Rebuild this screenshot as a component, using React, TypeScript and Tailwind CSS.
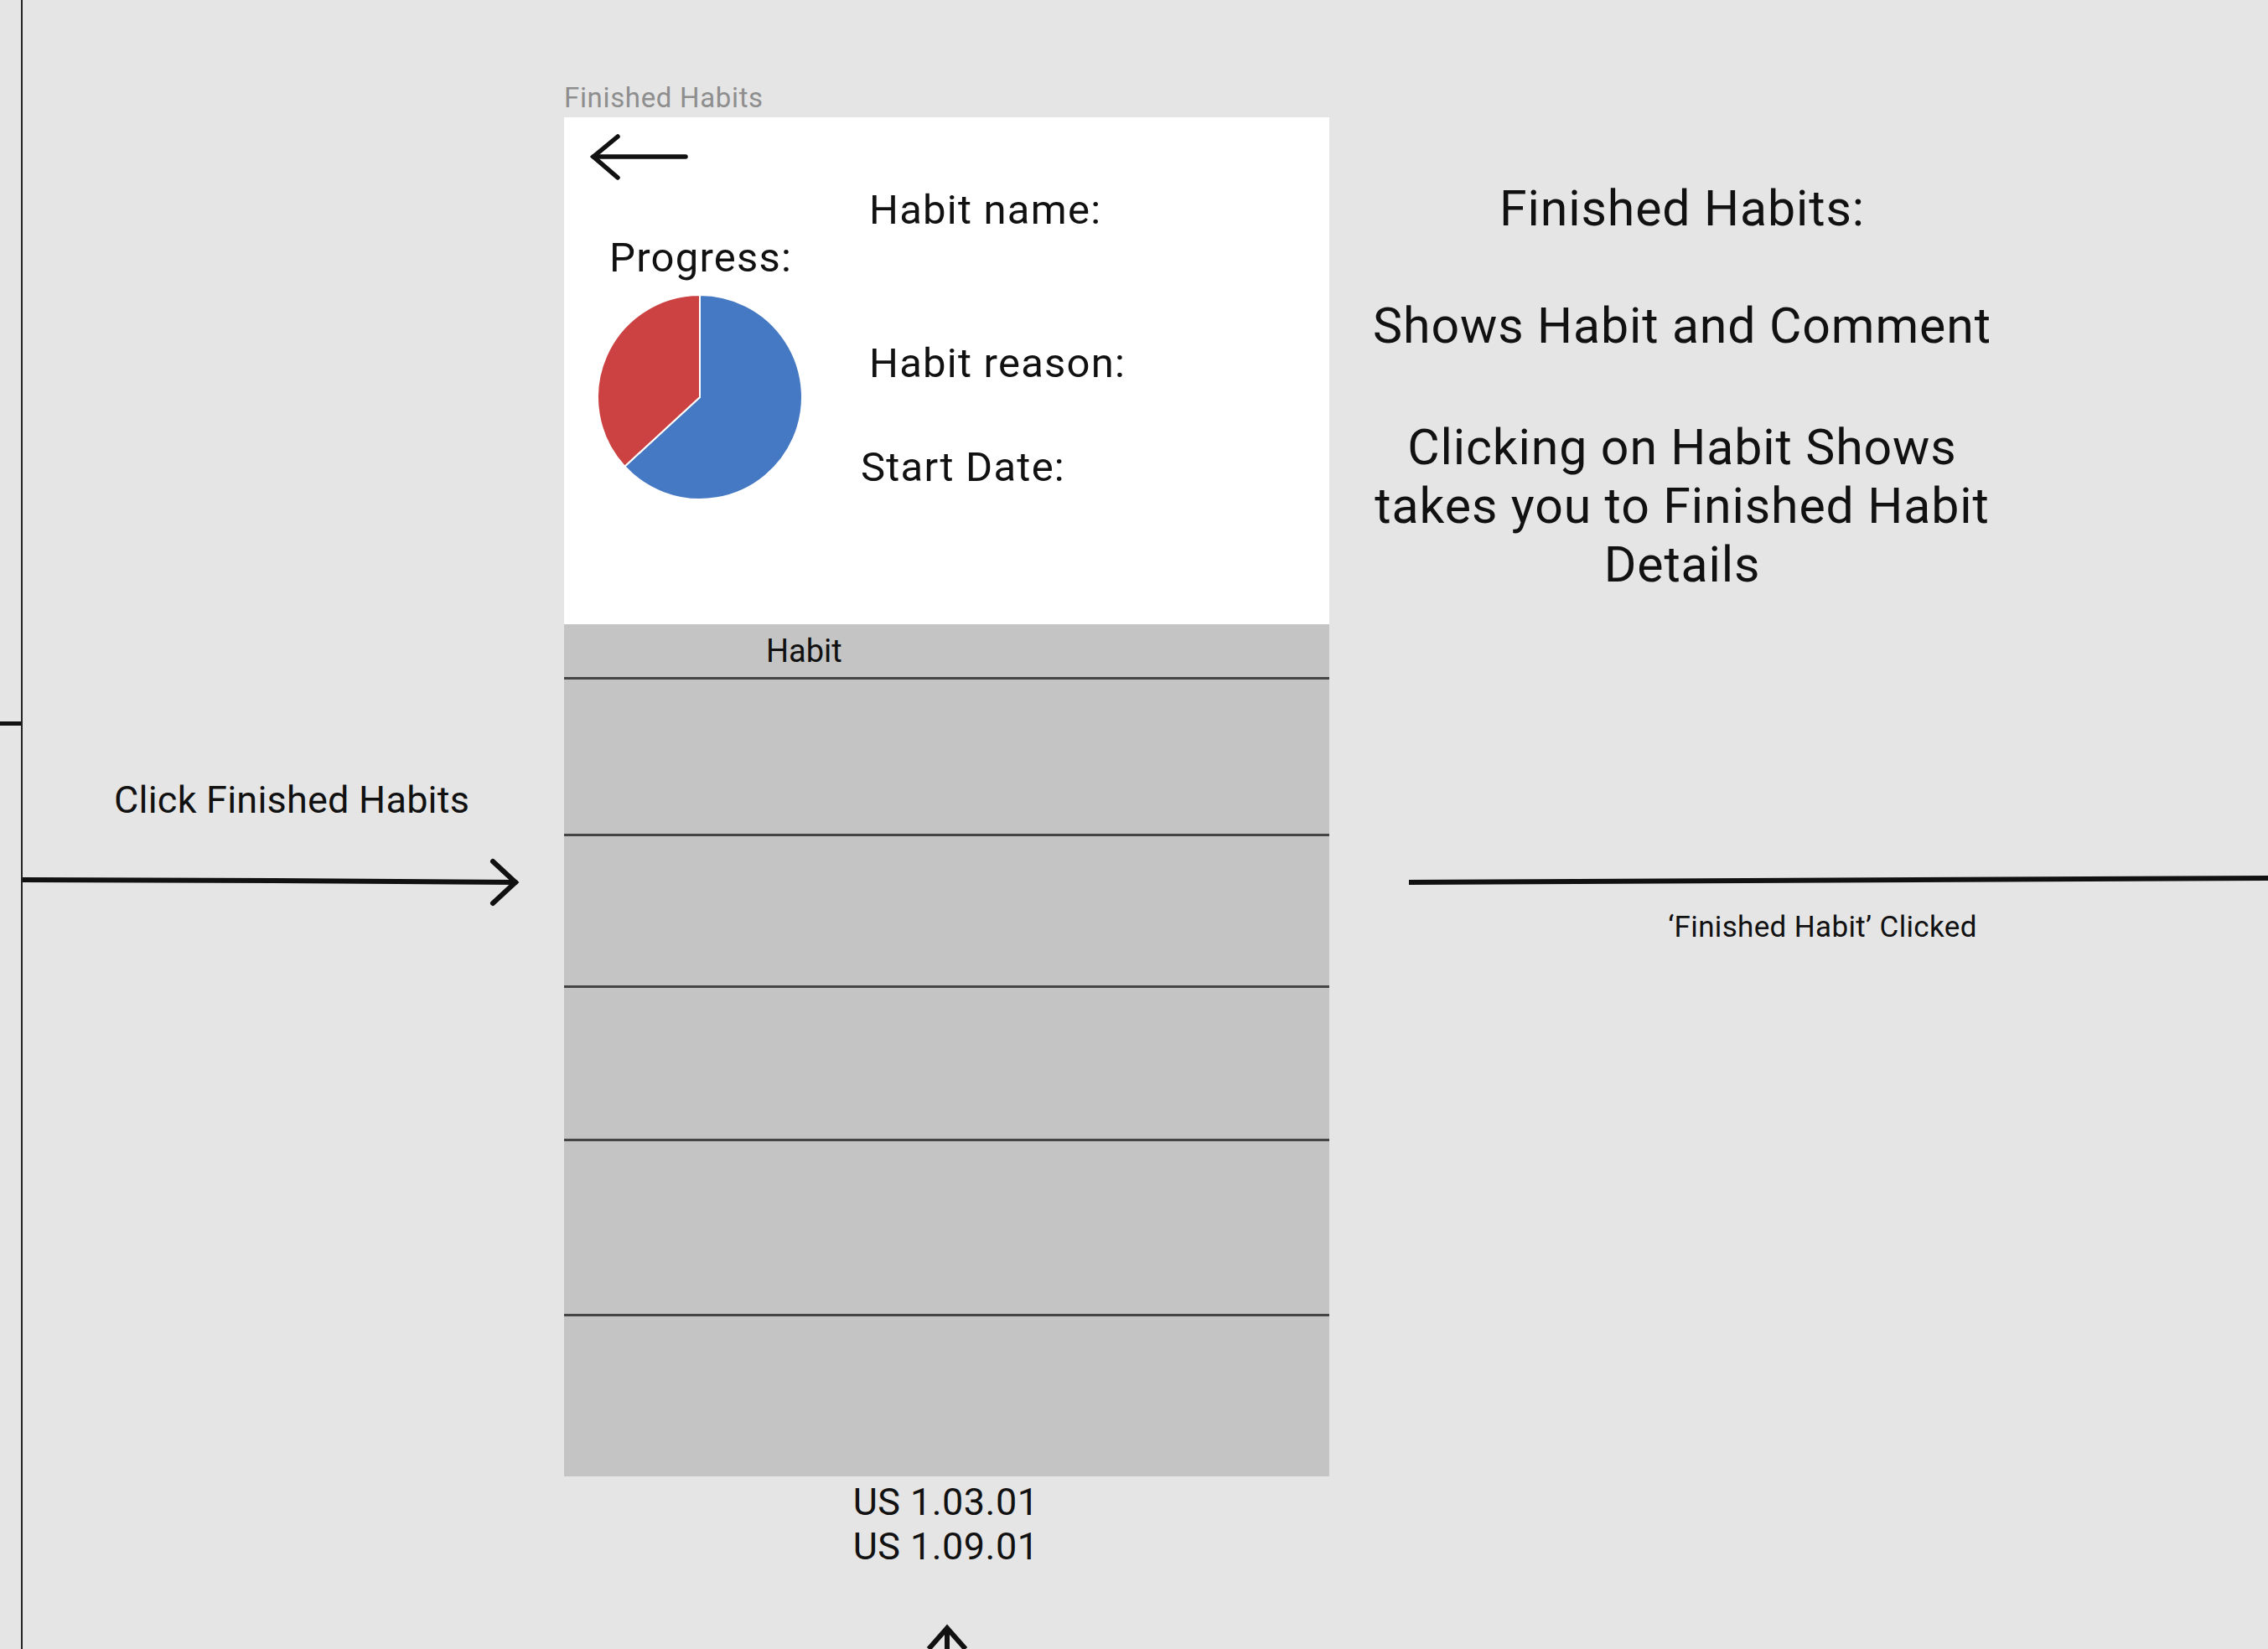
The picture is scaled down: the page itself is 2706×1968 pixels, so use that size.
export default function App() {
  const cx = 124;
  const cy = 123;
  const r = 122;
  const bx = cx - 89.7;
  const by = cy + 82.7;
  return (
    <div className="flex w-[2706px] h-[1968px] overflow-hidden bg-[#e5e5e5] text-[#111] font-['Roboto',sans-serif]">
      {/* left connector area */}
      <div className="flex w-[673px] shrink-0 h-full">
        <div className="w-[25px] shrink-0 pt-[861px]">
          <div className="h-[5px] bg-[#111]" />
        </div>
        <div className="w-[2px] shrink-0 h-full bg-[#222]" />
        <div className="flex-1 flex flex-col pt-[932px]">
          <div className="ml-[109px] text-[45px] leading-none tracking-[0.005em] whitespace-nowrap">
            Click Finished Habits
          </div>
          <svg className="mt-[45px]" width="600" height="63" viewBox="0 0 600 63" fill="none">
            <path d="M0 28 L300 29 L588 31" stroke="#111" strokeWidth="6" strokeLinecap="round" />
            <path d="M561 6 L588 31 L561 56" stroke="#111" strokeWidth="6" strokeLinecap="round" strokeLinejoin="miter" />
          </svg>
        </div>
      </div>

      {/* phone screen */}
      <div className="flex flex-col w-[913px] shrink-0">
        <div className="mt-[100px] text-[33px] leading-none tracking-[0.02em] text-[#8e8e8e] whitespace-nowrap">
          Finished Habits
        </div>
        <div className="mt-[7px] h-[606px] bg-white flex">
          <div className="w-[354px] shrink-0 flex flex-col">
            <svg className="ml-[27px] mt-[15px]" width="125" height="65" viewBox="0 0 125 65" fill="none">
              <path d="M8 32 L118 32" stroke="#111" strokeWidth="5.5" strokeLinecap="round" />
              <path d="M37 8 L8 32 L37 57" stroke="#111" strokeWidth="5.5" strokeLinecap="round" strokeLinejoin="miter" />
            </svg>
            <div className="ml-[54px] mt-[63px] text-[49px] leading-none tracking-[0.025em] whitespace-nowrap">
              Progress:
            </div>
            <svg className="ml-[38px] mt-[19px]" width="250" height="248" viewBox="0 0 250 248">
              <path
                d={`M${cx} ${cy} L${cx} ${cy - r} A${r} ${r} 0 1 1 ${bx} ${by} Z`}
                fill="#4679c3"
                stroke="#ffffff"
                strokeWidth="2"
                strokeLinejoin="round"
              />
              <path
                d={`M${cx} ${cy} L${bx} ${by} A${r} ${r} 0 0 1 ${cx} ${cy - r} Z`}
                fill="#cc4242"
                stroke="#ffffff"
                strokeWidth="2"
                strokeLinejoin="round"
              />
            </svg>
          </div>
          <div className="flex flex-col text-[49px] leading-none tracking-[0.025em] whitespace-nowrap">
            <div className="ml-[10px] mt-[86px]">Habit name:</div>
            <div className="ml-[10px] mt-[134px]">Habit reason:</div>
            <div className="mt-[75px]">Start Date:</div>
          </div>
        </div>
        <div className="h-[1018px] bg-[#c4c4c4] flex flex-col">
          <div className="h-[66px] border-b-[3px] border-[#444] pl-[241px] pt-[13px] text-[38px] leading-none">Habit</div>
          <div className="h-[187px] border-b-[3px] border-[#444]" />
          <div className="h-[181px] border-b-[3px] border-[#444]" />
          <div className="h-[183px] border-b-[3px] border-[#444]" />
          <div className="h-[209px] border-b-[3px] border-[#444]" />
          <div className="flex-1" />
        </div>
        <div className="mt-[4px] pr-[2px] text-center text-[45px] leading-[53px] tracking-[0.01em]">
          US 1.03.01
          <br />
          US 1.09.01
        </div>
        <svg className="self-center mt-[66px]" width="62" height="30" viewBox="0 0 62 30" fill="none">
          <path d="M31 5 L31 30" stroke="#111" strokeWidth="6" />
          <path d="M9 30 L31 5 L53 30" stroke="#111" strokeWidth="6" strokeLinejoin="miter" />
        </svg>
      </div>

      {/* right notes */}
      <div className="flex-1 flex flex-col">
        <div className="mt-[214px] w-[842px] text-center text-[59px] leading-[70px] tracking-[0.015em]">
          <p>Finished Habits:</p>
          <p className="mt-[70px]">Shows Habit and Comment</p>
          <p className="mt-[75px]">
            Clicking on Habit Shows
            <br />
            takes you to Finished Habit
            <br />
            Details
          </p>
        </div>
        <svg className="mt-[331px] ml-[95px]" width="1025" height="20" viewBox="0 0 1025 20" fill="none">
          <path d="M0 13 L1025 8" stroke="#111" strokeWidth="6" />
        </svg>
        <div className="mt-[29px] w-[1120px] pl-[57px] text-center text-[35px] leading-none tracking-[0.01em] whitespace-nowrap">
          ‘Finished Habit’ Clicked
        </div>
      </div>
    </div>
  );
}
